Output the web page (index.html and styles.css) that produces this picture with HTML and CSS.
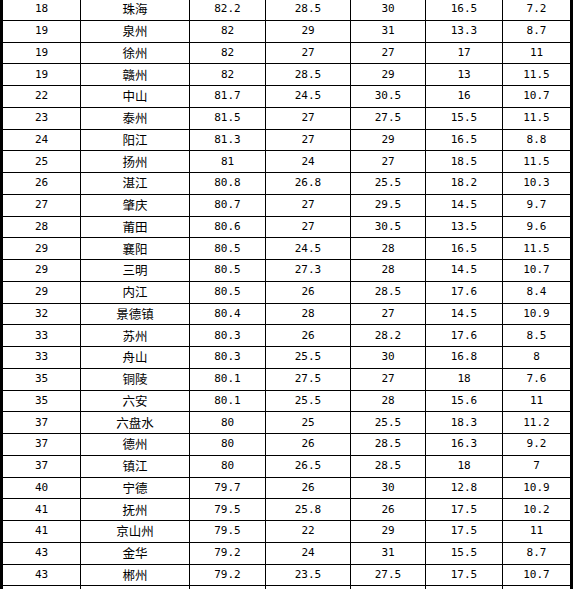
FILE: index.html
```html
<!DOCTYPE html>
<html lang="zh">
<head>
<meta charset="utf-8">
<link rel="stylesheet" href="styles.css">
</head>
<body>
<table class="rank">
<colgroup>
<col class="c1"><col class="c2"><col class="c3"><col class="c4"><col class="c5"><col class="c6"><col class="c7">
</colgroup>
<tbody>
<tr><td>18</td><td class="city">珠海</td><td>82.2</td><td>28.5</td><td>30</td><td>16.5</td><td>7.2</td></tr>
<tr><td>19</td><td class="city">泉州</td><td>82</td><td>29</td><td>31</td><td>13.3</td><td>8.7</td></tr>
<tr><td>19</td><td class="city">徐州</td><td>82</td><td>27</td><td>27</td><td>17</td><td>11</td></tr>
<tr><td>19</td><td class="city">赣州</td><td>82</td><td>28.5</td><td>29</td><td>13</td><td>11.5</td></tr>
<tr><td>22</td><td class="city">中山</td><td>81.7</td><td>24.5</td><td>30.5</td><td>16</td><td>10.7</td></tr>
<tr><td>23</td><td class="city">泰州</td><td>81.5</td><td>27</td><td>27.5</td><td>15.5</td><td>11.5</td></tr>
<tr><td>24</td><td class="city">阳江</td><td>81.3</td><td>27</td><td>29</td><td>16.5</td><td>8.8</td></tr>
<tr><td>25</td><td class="city">扬州</td><td>81</td><td>24</td><td>27</td><td>18.5</td><td>11.5</td></tr>
<tr><td>26</td><td class="city">湛江</td><td>80.8</td><td>26.8</td><td>25.5</td><td>18.2</td><td>10.3</td></tr>
<tr><td>27</td><td class="city">肇庆</td><td>80.7</td><td>27</td><td>29.5</td><td>14.5</td><td>9.7</td></tr>
<tr><td>28</td><td class="city">莆田</td><td>80.6</td><td>27</td><td>30.5</td><td>13.5</td><td>9.6</td></tr>
<tr><td>29</td><td class="city">襄阳</td><td>80.5</td><td>24.5</td><td>28</td><td>16.5</td><td>11.5</td></tr>
<tr><td>29</td><td class="city">三明</td><td>80.5</td><td>27.3</td><td>28</td><td>14.5</td><td>10.7</td></tr>
<tr><td>29</td><td class="city">内江</td><td>80.5</td><td>26</td><td>28.5</td><td>17.6</td><td>8.4</td></tr>
<tr><td>32</td><td class="city">景德镇</td><td>80.4</td><td>28</td><td>27</td><td>14.5</td><td>10.9</td></tr>
<tr><td>33</td><td class="city">苏州</td><td>80.3</td><td>26</td><td>28.2</td><td>17.6</td><td>8.5</td></tr>
<tr><td>33</td><td class="city">舟山</td><td>80.3</td><td>25.5</td><td>30</td><td>16.8</td><td>8</td></tr>
<tr><td>35</td><td class="city">铜陵</td><td>80.1</td><td>27.5</td><td>27</td><td>18</td><td>7.6</td></tr>
<tr><td>35</td><td class="city">六安</td><td>80.1</td><td>25.5</td><td>28</td><td>15.6</td><td>11</td></tr>
<tr><td>37</td><td class="city">六盘水</td><td>80</td><td>25</td><td>25.5</td><td>18.3</td><td>11.2</td></tr>
<tr><td>37</td><td class="city">德州</td><td>80</td><td>26</td><td>28.5</td><td>16.3</td><td>9.2</td></tr>
<tr><td>37</td><td class="city">镇江</td><td>80</td><td>26.5</td><td>28.5</td><td>18</td><td>7</td></tr>
<tr><td>40</td><td class="city">宁德</td><td>79.7</td><td>26</td><td>30</td><td>12.8</td><td>10.9</td></tr>
<tr><td>41</td><td class="city">抚州</td><td>79.5</td><td>25.8</td><td>26</td><td>17.5</td><td>10.2</td></tr>
<tr><td>41</td><td class="city">京山州</td><td>79.5</td><td>22</td><td>29</td><td>17.5</td><td>11</td></tr>
<tr><td>43</td><td class="city">金华</td><td>79.2</td><td>24</td><td>31</td><td>15.5</td><td>8.7</td></tr>
<tr><td>43</td><td class="city">郴州</td><td>79.2</td><td>23.5</td><td>27.5</td><td>17.5</td><td>10.7</td></tr>
<tr><td>&nbsp;</td><td class="city">&nbsp;</td><td></td><td></td><td></td><td></td><td></td></tr>
</tbody>
</table>
</body>
</html>
```
FILE: styles.css
```css
html, body {
  margin: 0;
  padding: 0;
  background: #fff;
  overflow: hidden;
}
body {
  width: 573px;
  height: 589px;
}
.rank {
  margin-top: -1px;
  width: 573px;
  table-layout: fixed;
  border-collapse: separate;
  border-spacing: 0;
  border-left: 3px solid #000;
  border-right: 3px solid #000;
  font-family: "DejaVu Sans Mono", "Noto Sans CJK SC", monospace;
  font-size: 11px;
  color: #000;
}
.c1 { width: 78px; }
.c2 { width: 109px; }
.c3 { width: 76px; }
.c4 { width: 85px; }
.c5 { width: 75px; }
.c6 { width: 77px; }
.c7 { width: 67px; }
.rank td {
  box-sizing: border-box;
  height: 21.75px;
  padding: 0;
  text-align: center;
  vertical-align: middle;
  border-right: 1px solid #000;
  border-bottom: 1px solid #000;
  line-height: 12px;
  white-space: nowrap;
  overflow: hidden;
}
.rank td:last-child {
  border-right: none;
}
.rank td.city {
  font-family: "Noto Sans CJK SC", sans-serif;
  font-size: 12.5px;
}
```
